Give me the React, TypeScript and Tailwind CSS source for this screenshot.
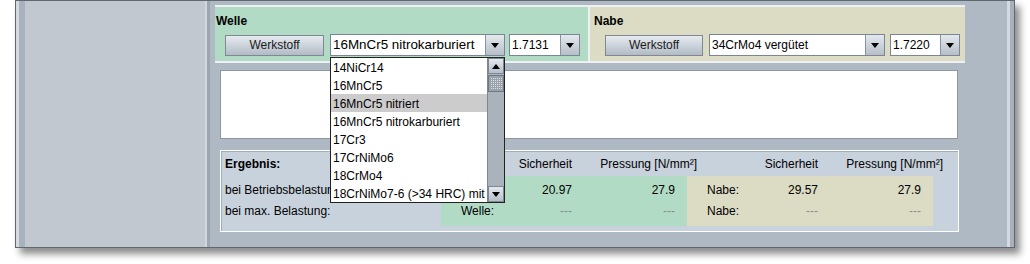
import React from 'react';

const materials = [
  '14NiCr14',
  '16MnCr5',
  '16MnCr5 nitriert',
  '16MnCr5 nitrokarburiert',
  '17Cr3',
  '17CrNiMo6',
  '18CrMo4',
  '18CrNiMo7-6 (>34 HRC) mit',
];

const Arrow = ({ up = false }: { up?: boolean }) => (
  <svg width="8" height="5" viewBox="0 0 8 5" className="block">
    <polygon points={up ? '0,5 8,5 4,0' : '0,0 8,0 4,5'} fill="#000" />
  </svg>
);

function Button({ width }: { width: string }) {
  return (
    <div
      className={`${width} h-[21px] mt-[1px] border border-[#7f8995] bg-gradient-to-b from-[#e6ebf0] to-[#b2bbc5] text-center leading-[19px] text-[#1a1a1a]`}
    >
      Werkstoff
    </div>
  );
}

function Combo({
  width,
  value,
  big = false,
  children,
}: {
  width: string;
  value: string;
  big?: boolean;
  children?: React.ReactNode;
}) {
  return (
    <div className={`${width} relative h-[22px] flex border border-[#7a8693] bg-white`}>
      <div
        className={`flex-1 pl-[2px] overflow-hidden whitespace-nowrap ${big ? 'text-[13.4px] leading-[20px]' : 'leading-[20px]'}`}
      >
        {value}
      </div>
      <div className="w-[19px] border-l border-[#8a949f] bg-gradient-to-b from-[#e4e9ee] to-[#b6bec8] flex items-center justify-center">
        <Arrow />
      </div>
      {children}
    </div>
  );
}

function Popup() {
  return (
    <div className="absolute left-[-1px] top-[22px] w-[175px] h-[146px] border border-[#222] bg-white z-10 overflow-hidden">
      {materials.map((m, i) => (
        <div
          key={m}
          className={`h-[18px] leading-[20px] pl-[2px] whitespace-nowrap ${i === 2 ? 'bg-[#cccccc]' : ''}`}
        >
          {m}
        </div>
      ))}
      <div className="absolute right-0 top-0 w-[17px] h-full bg-[#aab2bb] border-l border-[#7d8894] flex flex-col">
        <div className="h-[16px] border border-[#7d8894] bg-gradient-to-b from-[#e4e9ee] to-[#b6bec8] flex items-center justify-center">
          <Arrow up />
        </div>
        <div className="mt-[1px] h-[17px] border border-[#6f7a86]">
          <svg width="14" height="15" className="block">
            <defs>
              <pattern id="dots" width="2" height="2" patternUnits="userSpaceOnUse">
                <rect width="1" height="1" fill="#dde1e6" />
              </pattern>
            </defs>
            <rect width="14" height="15" fill="#9aa2ab" />
            <rect x="1" y="1" width="12" height="13" fill="url(#dots)" />
          </svg>
        </div>
        <div className="mt-auto h-[16px] border border-[#7d8894] bg-gradient-to-b from-[#e4e9ee] to-[#b6bec8] flex items-center justify-center">
          <Arrow />
        </div>
      </div>
    </div>
  );
}

function ValueBlock({
  label,
  rows,
  tone,
}: {
  label: string;
  rows: [string, string, boolean][];
  tone: string;
}) {
  return (
    <div className={`w-[246px] h-[50px] pt-[4px] ${tone}`}>
      {rows.map(([s, p, muted], i) => (
        <div key={i} className={`flex h-[21px] leading-[21px] ${muted ? 'text-[#8c8c8c]' : ''}`}>
          <div className="w-[131px] flex justify-between pl-[20px]">
            <span className="text-black">{label}</span>
            <span>{s}</span>
          </div>
          <div className="w-[103px] text-right">{p}</div>
        </div>
      ))}
    </div>
  );
}

export default function App() {
  return (
    <div className="w-[1030px] h-[264px] bg-white font-['Liberation_Sans',Arial,sans-serif] text-[12px] leading-[14px] text-black overflow-hidden">
      <div className="ml-[15px] w-[1000px] h-[248px] border border-[#5f6770] flex shadow-[5px_6px_7px_rgba(0,0,0,0.45)]">
        <div className="w-[3px] bg-[#d5dae0]" />
        <div className="w-[6px] bg-[#a9b2bc]" />
        <div className="w-[180px] bg-[#c1c8d0]" />
        <div className="w-[2px] bg-[#d2d7dd]" />
        <div className="w-[3px] bg-[#9ca6b0]" />
        <main className="w-[797px] bg-[#afb9c3] pt-[4px]">
          {/* Welle / Nabe material selection */}
          <div className="ml-[5px] w-[750px] h-[58px] flex">
            <div className="w-[373px] bg-[#b1dbc5] border-y-2 border-[#eef1f3]">
              <div className="pt-[7px] pl-[1px] h-[21px] font-bold">Welle</div>
              <div className="mt-[6px] h-[22px] flex items-start pl-[10px]">
                <Button width="w-[99px]" />
                <div className="ml-[6px]">
                  <Combo width="w-[175px]" value="16MnCr5 nitrokarburiert" big>
                    <Popup />
                  </Combo>
                </div>
                <div className="ml-[4px]">
                  <Combo width="w-[71px]" value="1.7131" />
                </div>
              </div>
            </div>
            <div className="w-[377px] bg-[#dcdcc4] border-y-2 border-l-2 border-[#eef1f3]">
              <div className="pt-[7px] pl-[4px] h-[21px] font-bold">Nabe</div>
              <div className="mt-[6px] h-[22px] flex items-start pl-[15px]">
                <Button width="w-[98px]" />
                <div className="ml-[6px]">
                  <Combo width="w-[176px]" value="34CrMo4 vergütet" />
                </div>
                <div className="ml-[5px]">
                  <Combo width="w-[70px]" value="1.7220" />
                </div>
              </div>
            </div>
          </div>

          {/* text area */}
          <div className="ml-[10px] mt-[7px] w-[738px] h-[69px] bg-white border border-[#8d97a1]" />

          {/* results */}
          <div className="ml-[10px] mt-[11px] w-[739px] h-[82px] bg-[#c8d2dd] border border-white shadow-[inset_1px_1px_0_#a3adb7]">
            <div className="flex h-[25px] pt-[3px] leading-[21px]">
              <div className="w-[220px] pl-[4px] font-bold">Ergebnis:</div>
              <div className="w-[131px] text-right">Sicherheit</div>
              <div className="w-[125px] text-right">Pressung [N/mm²]</div>
              <div className="w-[121px] text-right">Sicherheit</div>
              <div className="w-[125px] text-right">Pressung [N/mm²]</div>
            </div>
            <div className="flex">
              <div className="w-[220px] pt-[4px] pl-[4px]">
                <div className="h-[21px] leading-[21px]">bei Betriebsbelastung:</div>
                <div className="h-[21px] leading-[21px]">bei max. Belastung:</div>
              </div>
              <ValueBlock
                label="Welle:"
                tone="bg-[#b1dbc5]"
                rows={[
                  ['20.97', '27.9', false],
                  ['---', '---', true],
                ]}
              />
              <ValueBlock
                label="Nabe:"
                tone="bg-[#dcdcc4]"
                rows={[
                  ['29.57', '27.9', false],
                  ['---', '---', true],
                ]}
              />
            </div>
          </div>
        </main>
        <div className="w-[3px] bg-[#d5dae0]" />
        <div className="w-[4px] bg-[#a9b2bc]" />
      </div>
    </div>
  );
}
